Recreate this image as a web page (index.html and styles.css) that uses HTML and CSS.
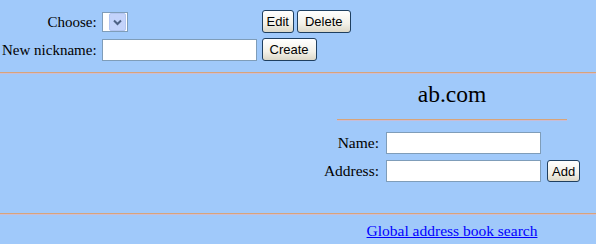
FILE: index.html
```html
<!DOCTYPE html>
<html>
<head>
  <link rel="stylesheet" href="styles.css">
</head>
<body>
  <div class="nick">
    <label class="lbl">Choose:</label>
    <div class="cell">
      <span class="combo">
        <span class="drop">
          <svg width="15" height="16" viewBox="0 0 15 16"><path d="M4 6.5 L7.5 10 L11 6.5" fill="none" stroke="#4d6185" stroke-width="2"/></svg>
        </span>
      </span>
    </div>
    <div class="cell">
      <button class="btn narrow">Edit</button>
      <button class="btn">Delete</button>
    </div>
    <label class="lbl">New nickname:</label>
    <div class="cell"><input class="field nickfield" type="text"></div>
    <div class="cell"><button class="btn">Create</button></div>
  </div>

  <hr class="rule">

  <div class="book">
    <div></div>
    <div class="entry">
      <h2 class="domain">ab.com</h2>
      <hr class="short">
      <div class="addr">
        <label class="lbl">Name:</label>
        <input class="field" type="text">
        <div></div>
        <label class="lbl">Address:</label>
        <input class="field" type="text">
        <button class="btn narrow">Add</button>
      </div>
    </div>
  </div>

  <hr class="rule low">

  <div class="book">
    <div></div>
    <div class="entry">
      <a class="search" href="#">Global address book search</a>
    </div>
  </div>
</body>
</html>
```

FILE: styles.css
```css
body {
  margin: 0;
  font-family: "Liberation Serif", "Times New Roman", serif;
  font-size: 15.5px;
  background-color: #a0c9fa;
  color: #000;
}
.nick {
  display: grid;
  grid-template-columns: auto 155px auto;
  justify-content: start;
  column-gap: 5px;
  row-gap: 5px;
  align-items: center;
  padding: 10px 0 0 2px;
  font-size: 15px;
}
.lbl {
  text-align: right;
  line-height: 18px;
  white-space: nowrap;
}
.cell {
  display: flex;
  align-items: center;
  gap: 3px;
}
.combo {
  display: flex;
  justify-content: flex-end;
  align-items: center;
  box-sizing: border-box;
  width: 26px;
  height: 20px;
  background: #fff;
  border: 1px solid #7f9db9;
  padding-right: 1px;
}
.drop {
  display: flex;
  align-items: center;
  justify-content: center;
  box-sizing: border-box;
  width: 17px;
  height: 18px;
  background: #c3d3fb;
  border: 1px solid #b3c6f2;
  border-radius: 2px;
}
.field {
  box-sizing: border-box;
  height: 22px;
  margin: 0;
  border: 1px solid #7f9db9;
  background: #fff;
  padding: 0 3px;
}
.nickfield {
  width: 155px;
}
.btn {
  box-sizing: border-box;
  height: 23px;
  margin: 0;
  padding: 0 7px;
  font-family: "Liberation Sans", Arial, sans-serif;
  font-size: 13px;
  color: #000;
  border: 1px solid #1f3f5f;
  border-radius: 3px;
  background: linear-gradient(#ffffff, #f3f1e8 60%, #dcd8c8);
}
.btn.narrow {
  padding: 0 4px;
}
.rule {
  height: 0;
  margin: 11px 0 0;
  border: 0;
  border-top: 1px solid #d8a47a;
  border-bottom: 1px solid #c8bcd6;
}
.rule.low {
  margin-top: 31px;
}
.book {
  display: grid;
  grid-template-columns: 308px 1fr;
}
.entry {
  display: flex;
  flex-direction: column;
  align-items: center;
}
.domain {
  margin: 7px 0 0;
  font-size: 23.5px;
  font-weight: normal;
  line-height: 27px;
}
.short {
  width: 230px;
  height: 0;
  margin: 11px 0 0;
  border: 0;
  border-top: 1px solid #d8a47a;
  border-bottom: 1px solid #c8bcd6;
}
.addr {
  display: grid;
  grid-template-columns: auto 155px auto;
  column-gap: 7px;
  row-gap: 6px;
  align-items: center;
  margin-top: 11px;
}
.addr .btn {
  height: 22px;
  margin-left: -1px;
}
.search {
  margin-top: 7px;
  line-height: 18px;
  color: #0000ff;
}
```
